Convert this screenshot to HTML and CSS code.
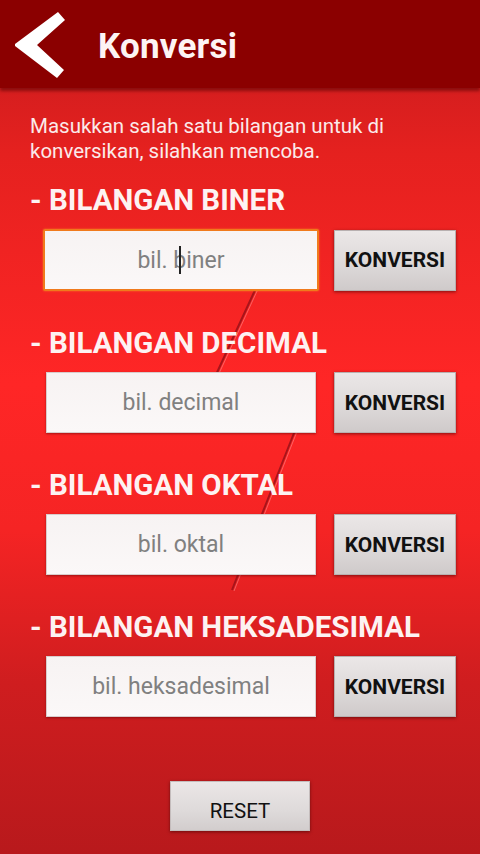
FILE: index.html
```html
<!DOCTYPE html>
<html lang="en">
<head>
    <meta charset="UTF-8">
    <meta name="viewport" content="width=device-width, initial-scale=1.0">
    <title>Konversi</title>
    <link rel="stylesheet" href="styles.css">
</head>
<body>
    <svg class="bg-lines" width="480" height="854" viewBox="0 0 480 854">
        <line x1="256" y1="288" x2="208" y2="392" class="line-dark"/>
        <line x1="258" y1="289" x2="210" y2="393" class="line-light"/>
        <line x1="296" y1="428" x2="232" y2="590" class="line-dark"/>
        <line x1="298" y1="429" x2="234" y2="591" class="line-light"/>
    </svg>
    <header class="topbar">
        <a href="#" class="back-btn" aria-label="Kembali">
            <svg width="56" height="70" viewBox="0 0 56 70">
                <polygon points="46,3 53,11 25,36 52,61 45,69 3,37 3,35" fill="#ffffff"/>
            </svg>
        </a>
        <h1 class="title">Konversi</h1>
    </header>
    <main class="content">
        <p class="intro">Masukkan salah satu bilangan untuk di konversikan, silahkan mencoba.</p>

        <section class="group">
            <h2>- BILANGAN BINER</h2>
            <div class="row">
                <span class="field-wrap">
                    <input type="text" class="field focused" placeholder="bil. biner">
                    <span class="caret"></span>
                </span>
                <button class="convert-btn">KONVERSI</button>
            </div>
        </section>

        <section class="group">
            <h2>- BILANGAN DECIMAL</h2>
            <div class="row">
                <input type="text" class="field" placeholder="bil. decimal">
                <button class="convert-btn">KONVERSI</button>
            </div>
        </section>

        <section class="group">
            <h2>- BILANGAN OKTAL</h2>
            <div class="row">
                <input type="text" class="field" placeholder="bil. oktal">
                <button class="convert-btn">KONVERSI</button>
            </div>
        </section>

        <section class="group">
            <h2>- BILANGAN HEKSADESIMAL</h2>
            <div class="row">
                <input type="text" class="field" placeholder="bil. heksadesimal">
                <button class="convert-btn">KONVERSI</button>
            </div>
        </section>

        <div class="reset-wrap">
            <button class="reset-btn">RESET</button>
        </div>
    </main>
</body>
</html>
```

FILE: styles.css
```css
* {
    margin: 0;
    padding: 0;
    box-sizing: border-box;
}
html, body {
    width: 480px;
    height: 854px;
    overflow: hidden;
}
body {
    font-family: Roboto, 'Noto Sans', sans-serif;
    background: linear-gradient(180deg, #c21a1e 0%, #e5211f 18%, #ff2626 45%, #f52424 62%, #cf1d1f 80%, #b8191c 100%);
    color: #ffffff;
    position: relative;
}
.bg-lines { position: absolute; top: 0; left: 0; pointer-events: none; z-index: 0; }
.line-dark { stroke: #a8141a; stroke-width: 2; }
.line-light { stroke: rgba(255, 150, 150, 0.55); stroke-width: 1; }

.topbar {
    position: relative;
    z-index: 2;
    height: 88px;
    background: #8b0000;
    display: flex;
    align-items: center;
    box-shadow: 0 3px 3px rgba(80, 0, 0, 0.55);
}
.back-btn { display: block; width: 56px; height: 70px; margin-left: 12px; }
.title {
    margin-left: 30px;
    font-size: 35px;
    font-weight: 700;
    color: #fdf4f4;
    letter-spacing: 0.2px;
    padding-top: 4px;
}

.content { position: relative; z-index: 1; padding: 26px 20px 0 30px; }
.intro {
    font-size: 20.5px;
    line-height: 25px;
    color: #fbeaea;
    margin-bottom: 19px;
    padding-right: 24px;
}
.group { margin-bottom: 35px; }
.group h2 {
    font-size: 29.5px;
    line-height: 34px;
    font-weight: 700;
    color: #fdf2f2;
    margin-bottom: 12px;
}
.row { display: flex; align-items: center; padding-left: 16px; }
.field {
    width: 270px;
    height: 61px;
    border: 1px solid #d8cccc;
    background: linear-gradient(180deg, #f7f3f3 0%, #fbf8f8 100%);
    font-family: Roboto, 'Noto Sans', sans-serif;
    font-size: 23px;
    text-align: center;
    color: #444;
    outline: none;
    box-shadow: 0 1px 2px rgba(90, 0, 0, 0.5);
}
.field::placeholder { color: #808080; }
.field-wrap { position: relative; display: block; margin-left: -3px; margin-right: -3px; }
.field.focused {
    display: block;
    width: 276px;
    height: 62px;
    border: 2px solid #f07a1c;
    border-radius: 2px;
    box-shadow: 0 0 2px rgba(255, 150, 40, 0.8);
}
.caret { position: absolute; left: 136px; top: 17px; width: 2px; height: 28px; background: #222; }
.convert-btn {
    margin-left: 18px;
    width: 122px;
    height: 61px;
    border: 1px solid #b8b0b0;
    background: linear-gradient(180deg, #ebe7e7 0%, #dcd8d8 60%, #cfcaca 100%);
    font-family: Roboto, 'Noto Sans', sans-serif;
    font-size: 21px;
    font-weight: 700;
    color: #111;
    box-shadow: 0 1px 3px rgba(60, 0, 0, 0.6);
}
.reset-wrap { display: flex; justify-content: center; padding-top: 29px; margin-left: -30px; margin-right: -20px; }
.reset-btn {
    width: 140px;
    height: 50px;
    border: 1px solid #c4bcbc;
    background: linear-gradient(180deg, #ebe6e6 0%, #dedada 60%, #d2cdcd 100%);
    font-family: Roboto, 'Noto Sans', sans-serif;
    font-size: 20.5px;
    color: #111;
    padding-top: 10px;
    box-shadow: 0 1px 3px rgba(60, 0, 0, 0.6);
}
```
